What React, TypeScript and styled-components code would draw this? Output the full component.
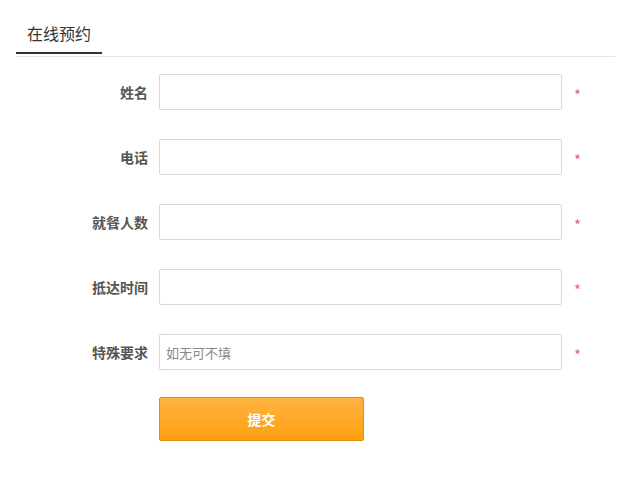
import React from 'react';
import styled, { createGlobalStyle } from 'styled-components';

const GlobalStyle = createGlobalStyle`
	body {
		margin: 0;
		background: #ffffff;
		font-family: "Microsoft YaHei", "Noto Sans CJK SC", "Liberation Sans", sans-serif;
	}
`;

const Page = styled.div`
	width: 620px;
	height: 477px;
	background: #ffffff;
	overflow: hidden;
`;

const TabBar = styled.div`
	display: flex;
	margin: 0 5px 0 16px;
	height: 56px;
	border-bottom: 1px solid #e6e6e6;
`;

const Tab = styled.div`
	display: flex;
	align-items: center;
	padding: 14px 11px 0 11px;
	height: 54px;
	box-sizing: border-box;
	border-bottom: 2px solid #333333;
	margin-bottom: -1px;
	font-size: 16px;
	color: #333333;
`;

const Form = styled.form`
	display: flex;
	flex-direction: column;
	gap: 29px;
	padding-top: 17px;
`;

const Row = styled.div`
	display: grid;
	grid-template-columns: 148px 403px auto;
	column-gap: 11px;
	align-items: center;
	height: 36px;
`;

const Label = styled.label`
	text-align: right;
	font-size: 14px;
	font-weight: bold;
	color: #555555;
`;

const Input = styled.input`
	box-sizing: border-box;
	width: 403px;
	height: 36px;
	padding: 0 6px;
	border: 1px solid #d9d9d9;
	border-radius: 2px;
	outline: none;
	font-family: inherit;
	font-size: 13px;
	color: #333333;

	&::placeholder {
		color: #888888;
	}
`;

const Star = styled.span`
	padding: 5px 0 0 1px;
	font-size: 15px;
	color: #e36b6b;
`;

const Actions = styled.div`
	padding: 0 0 0 159px;
	margin-top: -2px;
`;

const Submit = styled.button`
	width: 205px;
	height: 44px;
	border: 1px solid #e28c0c;
	border-radius: 2px;
	background: linear-gradient(to bottom, #ffb341, #ff9f10);
	font-family: inherit;
	font-size: 14px;
	font-weight: bold;
	color: #ffffff;
	cursor: pointer;
`;

const fields = [
	{ label: '姓名', placeholder: '' },
	{ label: '电话', placeholder: '' },
	{ label: '就餐人数', placeholder: '' },
	{ label: '抵达时间', placeholder: '' },
	{ label: '特殊要求', placeholder: '如无可不填' },
];

function App() {
	return (
		<Page>
			<GlobalStyle/>
			<TabBar>
				<Tab>在线预约</Tab>
			</TabBar>
			<Form onSubmit={(e) => e.preventDefault()}>
				{ fields.map((f) => (
					<Row key={ f.label }>
						<Label>{ f.label }</Label>
						<Input placeholder={ f.placeholder }/>
						<Star>*</Star>
					</Row>
				)) }
				<Actions>
					<Submit type="submit">提交</Submit>
				</Actions>
			</Form>
		</Page>
	);
}

export default App;
